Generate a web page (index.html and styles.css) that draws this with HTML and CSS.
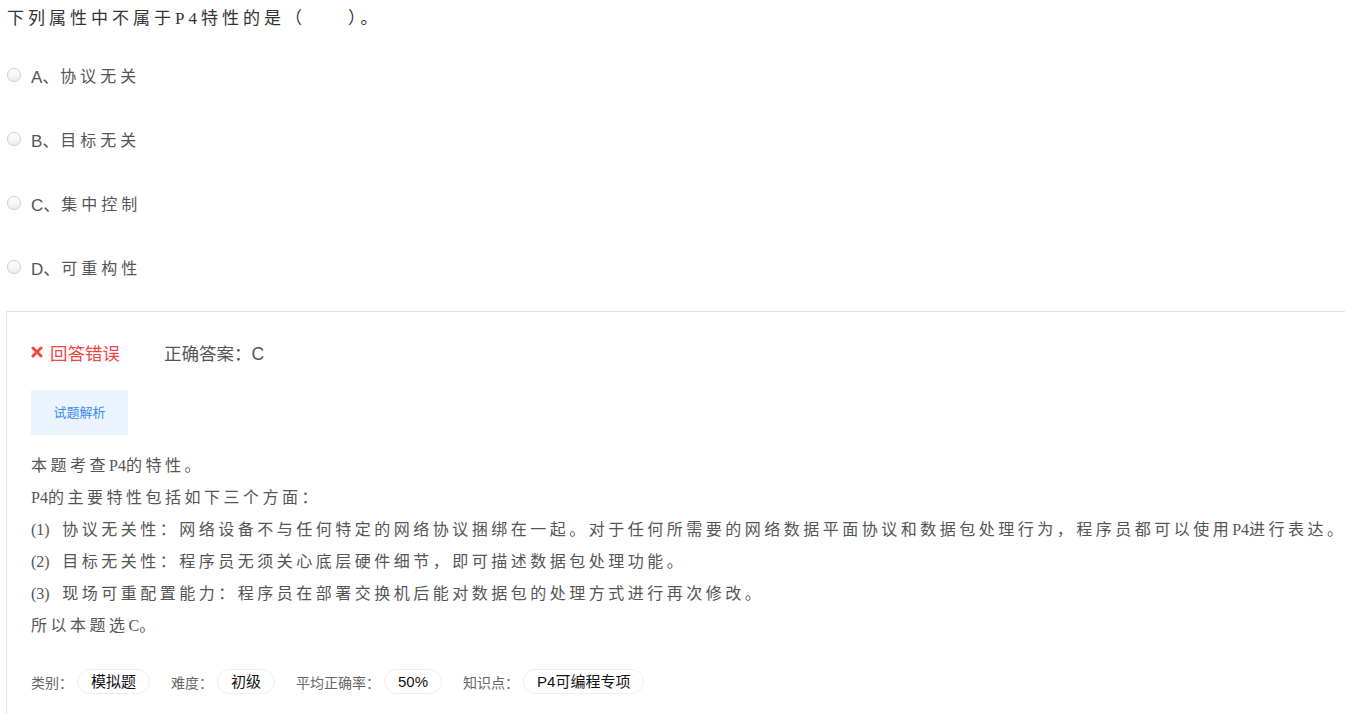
FILE: index.html
```html
<!DOCTYPE html>
<html lang="zh-CN">
<head>
  <meta charset="UTF-8">
  <title>试题</title>
  <link rel="stylesheet" href="styles.css">
</head>
<body>
  <div class="question">
    <div class="stem">下列属性中不属于P4特性的是（　　）。</div>

    <ul class="options">
      <li class="option"><span class="radio"></span><span class="opt-key">A、</span><span class="opt-text">协议无关</span></li>
      <li class="option"><span class="radio"></span><span class="opt-key">B、</span><span class="opt-text">目标无关</span></li>
      <li class="option"><span class="radio"></span><span class="opt-key">C、</span><span class="opt-text">集中控制</span></li>
      <li class="option"><span class="radio"></span><span class="opt-key">D、</span><span class="opt-text">可重构性</span></li>
    </ul>

    <div class="answer-box">
      <div class="result">
        <span class="wrong">
          <svg class="wrong-icon" viewBox="0 0 12 12" width="12" height="12">
            <path d="M2 2 L10 10 M10 2 L2 10" stroke="#f5453f" stroke-width="3" stroke-linecap="round"/>
          </svg>
          回答错误
        </span>
        <span class="right-answer">正确答案：C</span>
      </div>

      <div class="analysis-tab">试题解析</div>

      <div class="analysis">
        <p>本题考查<span class="lat">P4</span>的特性。</p>
        <p><span class="lat">P4</span>的主要特性包括如下三个方面：</p>
        <p><span class="num">(1)</span> 协议无关性：网络设备不与任何特定的网络协议捆绑在一起。对于任何所需要的网络数据平面协议和数据包处理行为，程序员都可以使用<span class="lat">P4</span>进行表达。</p>
        <p><span class="num">(2)</span> 目标无关性：程序员无须关心底层硬件细节，即可描述数据包处理功能。</p>
        <p><span class="num">(3)</span> 现场可重配置能力：程序员在部署交换机后能对数据包的处理方式进行再次修改。</p>
        <p>所以本题选<span class="lat">C</span>。</p>
      </div>

      <div class="meta">
        <span class="meta-label">类别：</span><span class="tag">模拟题</span>
        <span class="meta-label">难度：</span><span class="tag">初级</span>
        <span class="meta-label">平均正确率：</span><span class="tag">50%</span>
        <span class="meta-label">知识点：</span><span class="tag">P4可编程专项</span>
      </div>
    </div>
  </div>
</body>
</html>
```

FILE: styles.css
```css
body {
  margin: 0;
  background: #fff;
  font-family: "Liberation Sans", "Noto Sans CJK SC", sans-serif;
  overflow: hidden;
}
.question {
  padding: 7px 0 0 6px;
}
.stem {
  font-family: "Liberation Serif", "Noto Sans CJK SC", serif;
  font-size: 17px;
  line-height: 24px;
  letter-spacing: 4px;
  color: #333;
  padding-left: 1px;
}
.options {
  list-style: none;
  margin: 0;
  padding: 12px 0 0 0;
}
.option {
  display: flex;
  align-items: center;
  height: 64px;
  font-size: 16px;
  color: #555;
}
.radio {
  width: 12px;
  height: 12px;
  border: 1px solid #ccc;
  border-radius: 50%;
  background: linear-gradient(#fff, #eee);
  margin: 0 10px 0 1px;
}
.opt-key {
  font-size: 17px;
}
.opt-text {
  font-family: "Liberation Serif", "Noto Sans CJK SC", serif;
  letter-spacing: 4px;
  margin-left: 1px;
}
.answer-box {
  margin-top: 12px;
  border-top: 1px solid #e3e3e3;
  border-left: 1px solid #e3e3e3;
  padding: 27px 0 20px 24px;
}
.result {
  display: flex;
  align-items: center;
  height: 26px;
  font-size: 17.5px;
}
.wrong {
  display: flex;
  align-items: center;
  gap: 7px;
  color: #f5453f;
  width: 133px;
}
.right-answer {
  color: #555;
}
.analysis-tab {
  display: inline-block;
  margin-top: 25px;
  width: 97px;
  height: 45px;
  line-height: 45px;
  text-align: center;
  font-size: 13px;
  color: #3d8cf0;
  background: #ebf3ff;
}
.analysis {
  margin-top: 15px;
  font-family: "Liberation Serif", "Noto Sans CJK SC", serif;
  font-size: 16px;
  color: #555;
  letter-spacing: 3.5px;
  white-space: nowrap;
}
.analysis p {
  margin: 0;
  line-height: 32px;
}
.lat {
  letter-spacing: 0;
}
.num {
  letter-spacing: 0;
  margin-right: 5px;
}
.meta {
  display: flex;
  align-items: center;
  margin-top: 27px;
  font-size: 14px;
}
.meta-label {
  color: #666;
  margin-right: 4px;
}
.tag {
  display: inline-block;
  height: 23px;
  line-height: 23px;
  padding: 0 13px;
  border: 1px solid #eee;
  border-radius: 13px;
  font-size: 15px;
  color: #111;
  margin-right: 21px;
}
```
